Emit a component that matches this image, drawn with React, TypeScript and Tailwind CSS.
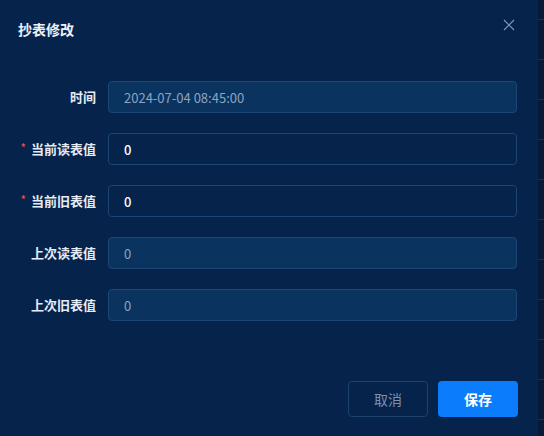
import React from "react";

type Field = {
  label: string;
  value: string;
  required?: boolean;
  disabled?: boolean;
};

const fields: Field[] = [
  { label: "时间", value: "2024-07-04 08:45:00", disabled: true },
  { label: "当前读表值", value: "0", required: true },
  { label: "当前旧表值", value: "0", required: true },
  { label: "上次读表值", value: "0", disabled: true },
  { label: "上次旧表值", value: "0", disabled: true },
];

function CloseIcon() {
  return (
    <svg width="12" height="12" viewBox="0 0 12 12" fill="none">
      <path d="M1 1L11 11M11 1L1 11" stroke="#7f97b8" strokeWidth="1.2" />
    </svg>
  );
}

export default function App() {
  return (
    <div
      className="flex w-[544px] h-[436px] overflow-hidden"
      style={{ fontFamily: '"Noto Sans CJK SC", "Noto Sans", sans-serif' }}
    >
      <div className="w-[538px] h-full bg-[#05234b] flex flex-col">
        {/* Header */}
        <div className="h-[58px] flex items-center justify-between pl-[18px] pr-[22px]">
          <h2 className="text-[14px] font-bold text-[#eef2f8] leading-none">
            抄表修改
          </h2>
          <button className="mb-[9px] flex items-center justify-center w-[14px] h-[14px]">
            <CloseIcon />
          </button>
        </div>

        {/* Form */}
        <div className="flex flex-col gap-[20px] pt-[23px]">
          {fields.map((f) => (
            <div key={f.label} className="flex items-center h-[32px]">
              <div className="w-[96px] flex items-center justify-end text-[13px] font-bold text-[#e6ecf5]">
                {f.required && (
                  <span className="text-[#e05a66] mr-[5px] text-[12px] font-normal leading-none -mt-[3px]">
                    *
                  </span>
                )}
                <span>{f.label}</span>
              </div>
              <input
                readOnly
                value={f.value}
                disabled={f.disabled}
                className={
                  f.disabled
                    ? "ml-[12px] w-[409px] h-[32px] rounded-[4px] border border-[#1c4673] bg-[#0b335f] px-[15px] text-[13px] text-[#8ea3bf] outline-none"
                    : "ml-[12px] w-[409px] h-[32px] rounded-[4px] border border-[#1c4673] bg-[#05234b] px-[15px] text-[13px] font-medium text-white outline-none"
                }
                style={{ fontFamily: '"Noto Sans CJK SC", "Noto Sans", sans-serif' }}
              />
            </div>
          ))}
        </div>

        {/* Footer */}
        <div className="flex justify-end gap-[10px] pr-[20px] mt-[60px]">
          <button className="w-[80px] h-[36px] rounded-[4px] border border-[#1d426d] text-[14px] text-[#7d90ab]">
            取消
          </button>
          <button className="w-[80px] h-[36px] rounded-[4px] bg-[#0a7cfc] text-[14px] font-bold text-white">
            保存
          </button>
        </div>
      </div>

      {/* Background table edge */}
      <div className="flex-1 h-full bg-[#081a36] flex flex-col">
        <div className="h-[20px] border-b border-[#1a2d4a] shrink-0" />
        {Array.from({ length: 10 }).map((_, i) => (
          <div key={i} className="h-[40px] border-b border-[#1a2d4a] shrink-0" />
        ))}
      </div>
    </div>
  );
}
